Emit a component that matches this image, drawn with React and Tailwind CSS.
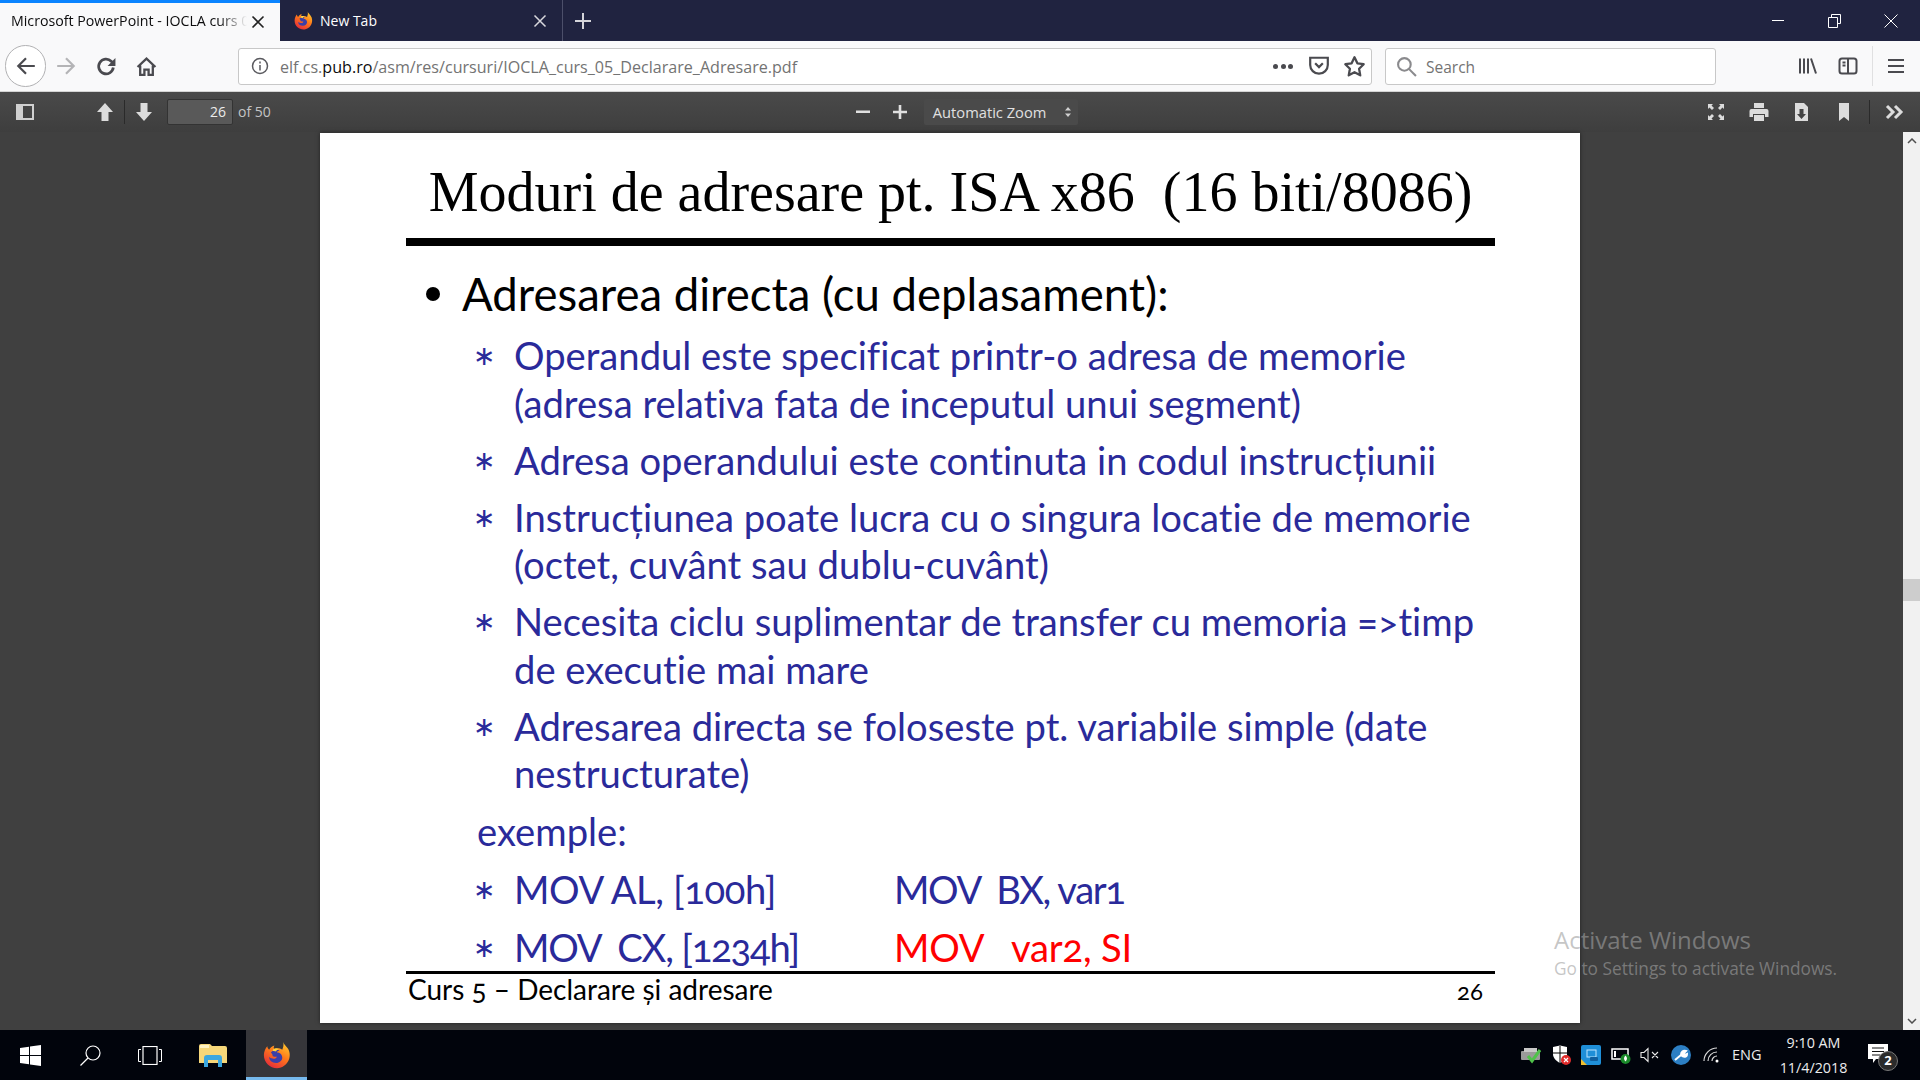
import { useId } from 'react';

const uiFont = 'font-["Open_Sans",sans-serif]';

function Firefox({ size = 20 }) {
  const id = useId();
  return (
    <svg width={size} height={size} viewBox="0 0 32 32">
      <defs>
        <linearGradient id={id + 'a'} x1="0.8" y1="0" x2="0.2" y2="1">
          <stop offset="0" stopColor="#ffcb2e" />
          <stop offset="0.45" stopColor="#ff7a1a" />
          <stop offset="1" stopColor="#e3263c" />
        </linearGradient>
      </defs>
      <path d="M23 1c1 3 3 4 5 7 3 4 3 9 2 12-2 7-8 11-14 11C8 31 1 25 1 16 1 12 3 8 5 6c0 2 1 3 2 4 1-2 3-4 6-5-1 2-1 3 0 4 3-1 6-1 9 1 1-3 2-5 1-9z" fill={`url(#${id}a)`} />
      <path d="M9 13c3-3 7-4 10-2-2 0-3 1-3 2 3 0 6 2 6 6 0 3-3 6-7 6-5 0-8-3-8-7 1 1 2 2 4 2 2 1 4 0 5-2-2 0-4 0-5-1 0-2-1-3-2-4z" fill="#3b3fa8" />
      <path d="M12 9c2-1 4-1 6 0-2 1-3 2-3 3l-4-1z" fill="#ffd23f" />
    </svg>
  );
}

function PdfIcon({ children, w = 20 }) {
  return (
    <svg width={w} height="20" viewBox="0 0 20 20" fill="#dcdcdc">
      {children}
    </svg>
  );
}

function TitleBar() {
  return (
    <div className={`flex h-[41px] shrink-0 bg-[#202340] ${uiFont}`}>
      <div className="flex w-[280px] items-center border-t-[3px] border-[#0a84ff] bg-[#f9f9fa] pl-[11px] pr-[15px]">
        <div className="w-[236px] overflow-hidden whitespace-nowrap pb-[2px] text-[14.200px] text-[#0c0c0d] [mask-image:linear-gradient(to_right,black_88%,transparent)]">
          Microsoft PowerPoint - IOCLA curs 05
        </div>
        <svg className="ml-auto" width="14" height="14" viewBox="0 0 14 14" stroke="#222" strokeWidth="1.600">
          <path d="M1.500 1.500l11 11M12.500 1.500l-11 11" />
        </svg>
      </div>
      <div className="flex w-[283px] items-center border-r border-[#4c4f6a] pl-[14px] pr-[15px] text-white">
        <Firefox size={19} />
        <span className="ml-[7px] text-[14px]">New Tab</span>
        <svg className="ml-auto" width="14" height="14" viewBox="0 0 14 14" stroke="#d8d8dd" strokeWidth="1.500">
          <path d="M1.500 1.500l11 11M12.500 1.500l-11 11" />
        </svg>
      </div>
      <div className="flex w-10 items-center justify-center">
        <svg width="20" height="20" viewBox="0 0 20 20" stroke="#d4d4da" strokeWidth="2">
          <path d="M10 2v16M2 10h16" />
        </svg>
      </div>
      <div className="ml-auto flex">
        <div className="flex w-14 items-center justify-center">
          <div className="h-px w-3 bg-white" />
        </div>
        <div className="flex w-14 items-center justify-center">
          <svg width="13" height="14" viewBox="0 0 13 14" fill="none" stroke="#fff">
            <path d="M3.500 3V.5h9v9H10M.5 3.500h9v10h-9z" />
          </svg>
        </div>
        <div className="flex w-[58px] items-center justify-center">
          <svg width="14" height="14" viewBox="0 0 14 14" stroke="#fff">
            <path d="M.5.5l13 13M13.500.5l-13 13" />
          </svg>
        </div>
      </div>
    </div>
  );
}

function NavIcon({ children }) {
  return <div className="flex h-full w-10 items-center justify-center">{children}</div>;
}

function NavBar() {
  return (
    <div className={`flex h-[51px] shrink-0 items-center border-b border-[#d4d4d4] bg-[#f9f9fa] pl-[5px] ${uiFont}`}>
      <div className="flex h-[42px] w-[41px] items-center justify-center rounded-full border border-[#b1b1b3] bg-white">
        <svg width="22" height="22" viewBox="0 0 20 20" fill="none" stroke="#4a4a4f" strokeWidth="2">
          <path d="M18 10H3M10 3l-7 7 7 7" />
        </svg>
      </div>
      <NavIcon>
        <svg width="22" height="22" viewBox="0 0 20 20" fill="none" stroke="#b4b4b6" strokeWidth="2">
          <path d="M2 10h15M10 3l7 7-7 7" />
        </svg>
      </NavIcon>
      <NavIcon>
        <svg width="21" height="21" viewBox="0 0 20 20" fill="none" stroke="#4a4a4f" strokeWidth="2.600">
          <path d="M16.500 11a7 7 0 1 1-2-6l2 2" />
          <path d="M18.500 2V9.500h-7.500z" fill="#4a4a4f" stroke="none" />
        </svg>
      </NavIcon>
      <NavIcon>
        <svg width="21" height="21" viewBox="0 0 20 20" fill="none" stroke="#4a4a4f" strokeWidth="2.200">
          <path d="M1.500 10.500L10 2.500l8.500 8M4 9v9h4v-5h4v5h4V9" />
        </svg>
      </NavIcon>
      <div className="ml-[72px] flex h-[37px] w-[1134px] items-center rounded-[3px] border border-[#c8c8c8] bg-white">
        <svg className="ml-[12px]" width="18" height="18" viewBox="0 0 18 18" fill="none" stroke="#5a5a5f" strokeWidth="1.500">
          <circle cx="9" cy="9" r="7.500" />
          <path d="M9 8v5.500M9 4.500v2" />
        </svg>
        <div className="ml-[11px] pt-[2px] text-[16.100px] text-[#737373]">
          elf.cs.<span className="text-[#0c0c0d]">pub.ro</span>/asm/res/cursuri/IOCLA_curs_05_Declarare_Adresare.pdf
        </div>
        <div className="ml-auto flex w-[102px] items-center">
          <div className="ml-[4px] flex w-[20px] justify-between">
            <span className="h-[5px] w-[5px] rounded-full bg-[#4a4a4f]" />
            <span className="h-[5px] w-[5px] rounded-full bg-[#4a4a4f]" />
            <span className="h-[5px] w-[5px] rounded-full bg-[#4a4a4f]" />
          </div>
          <svg className="ml-[15px]" width="22" height="22" viewBox="0 0 20 20" fill="none" stroke="#4a4a4f" strokeWidth="2">
            <path d="M2 2.500h16V9a8 8 0 0 1-16 0zM6.500 7.500L10 11l3.500-3.500" />
          </svg>
          <svg className="ml-[13px]" width="23" height="23" viewBox="0 0 20 20" fill="none" stroke="#4a4a4f" strokeWidth="2" strokeLinejoin="round">
            <path d="M10 2l2.500 5.200 5.500.8-4 4 1 5.700-5-2.700-5 2.700 1-5.700-4-4 5.500-.8z" />
          </svg>
        </div>
      </div>
      <div className="ml-[13px] flex h-[37px] w-[331px] items-center rounded-[3px] border border-[#c8c8c8] bg-white">
        <svg className="ml-[10px]" width="21" height="21" viewBox="0 0 20 20" fill="none" stroke="#8a8a8d" strokeWidth="2">
          <circle cx="8" cy="8" r="6" />
          <path d="M12.500 12.500L19 19" />
        </svg>
        <span className="ml-[9px] pt-[3px] text-[15.500px] text-[#737373]">Search</span>
      </div>
      <div className="ml-[72px] flex h-full">
        <NavIcon>
          <svg width="20" height="20" viewBox="0 0 20 20" fill="none" stroke="#4a4a4f" strokeWidth="2">
            <path d="M2 2.500v15M6 2.500v15M10 2.500v15M13 2.500l5 15" />
          </svg>
        </NavIcon>
        <NavIcon>
          <svg width="20" height="20" viewBox="0 0 20 20" fill="none" stroke="#4a4a4f" strokeWidth="2">
            <rect x="1.500" y="2.500" width="17" height="15" rx="2.500" />
            <path d="M10 2.500v15M4.500 6.500h3M4.500 9.500h3" />
          </svg>
        </NavIcon>
      </div>
      <div className="ml-[4px] h-[40px] w-px bg-[#e0e0e1]" />
      <div className="ml-[3px] flex h-full">
        <NavIcon>
          <svg width="16" height="16" viewBox="0 0 16 16" stroke="#4a4a4f" strokeWidth="2">
            <path d="M0 2h16M0 8h16M0 14h16" />
          </svg>
        </NavIcon>
      </div>
    </div>
  );
}

function PdfToolbar() {
  return (
    <div className={`flex h-[40px] shrink-0 items-center bg-gradient-to-b from-[#4a4a4a] to-[#3e3e3e] pl-[16px] text-[#d8d8d8] ${uiFont}`}>
      <svg width="18" height="16" viewBox="0 0 18 16">
        <rect x="1" y="1" width="16" height="14" fill="none" stroke="#d0d0d0" strokeWidth="2" />
        <rect x="2" y="2" width="5" height="12" fill="#d0d0d0" />
      </svg>
      <div className="ml-[61px]">
        <PdfIcon>
          <path d="M10 1l8 9h-4.500v9h-7v-9H2z" />
        </PdfIcon>
      </div>
      <div className="ml-[9px] h-[24px] w-px bg-[#2a2a2a]" />
      <div className="ml-[9px]">
        <PdfIcon>
          <path d="M10 19l8-9h-4.500V1h-7v9H2z" />
        </PdfIcon>
      </div>
      <div className="ml-[13px] flex h-[26px] w-[66px] items-center justify-end rounded-[2px] border border-[#333] bg-[#595959] pb-px pr-[6px] text-[14px] text-[#ececec]">
        26
      </div>
      <span className="ml-[5px] pb-[2px] text-[14px] text-[#c4c4c4]">of 50</span>
      <svg className="ml-[585px]" width="14" height="14" viewBox="0 0 14 14" fill="#e0e0e0">
        <rect y="5.500" width="14" height="2.500" />
      </svg>
      <svg className="ml-[23px]" width="14" height="14" viewBox="0 0 14 14" fill="#e0e0e0">
        <path d="M5.700 0h2.600v5.700H14v2.600H8.300V14H5.700V8.300H0V5.700h5.700z" />
      </svg>
      <div className="ml-[17px] flex h-[26px] w-[154px] items-center rounded-[2px] bg-[#4a4a4a] pl-[9px] text-[14.700px] text-[#e0e0e0]">
        Automatic Zoom
        <svg className="ml-auto mr-[6px]" width="8" height="12" viewBox="0 0 8 12" fill="#d0d0d0">
          <path d="M4 1l3 3.500H1zM4 11L1 7.500h6z" />
        </svg>
      </div>
      <div className="ml-auto flex items-center pr-[15px]">
        <PdfIcon>
          <path d="M2 2h5L5.500 3.500 8 6 6 8 3.500 5.500 2 7zM18 2v5l-1.500-1.500L14 8l-2-2 2.500-2.500L13 2zM2 18v-5l1.500 1.500L6 12l2 2-2.500 2.500L7 18zM18 18h-5l1.500-1.500L12 14l2-2 2.500 2.500L18 13z" />
        </PdfIcon>
        <div className="ml-[23px]">
          <PdfIcon>
            <path d="M5 1h10v5H5zM2.500 7h15A2 2 0 0 1 19.500 9v6H16v-3H4v3H.5V9a2 2 0 0 1 2-2zM5 13h10v6H5z" />
          </PdfIcon>
        </div>
        <div className="ml-[22px]">
          <PdfIcon>
            <path d="M4 1h9l4 4v14H4zM8.500 7v5H6l4.500 5 4.500-5h-2.500V7z" />
          </PdfIcon>
        </div>
        <div className="ml-[23px]">
          <PdfIcon>
            <path d="M5 1h10v18l-5-4-5 4z" />
          </PdfIcon>
        </div>
        <div className="ml-[15px] h-[24px] w-px bg-[#2a2a2a]" />
        <svg className="ml-[15px]" width="20" height="16" viewBox="0 0 20 16" fill="none" stroke="#dcdcdc" strokeWidth="3">
          <path d="M2 2l6 6-6 6M10 2l6 6-6 6" />
        </svg>
      </div>
    </div>
  );
}

function Star() {
  return <span className='w-[42px] shrink-0 pl-[1px] font-["DejaVu_Sans",sans-serif] text-[27px] tracking-normal'>∗</span>;
}

function Sub({ lines }) {
  return (
    <div className="mt-[9.500px] flex text-[#2a2a9a] first:mt-0">
      <Star />
      <div>
        {lines.map(l => (
          <div key={l} className="whitespace-pre">{l}</div>
        ))}
      </div>
    </div>
  );
}

function Slide() {
  return (
    <div className="ml-[320px] flex h-[890px] w-[1260px] flex-col bg-white pl-[86px] pr-[85px] pt-[25px] text-black shadow-[0_0_4px_rgba(0,0,0,0.5)]">
      <h1 className='h-[68px] whitespace-pre text-center font-["Liberation_Serif",serif] text-[56px] leading-[68px]'>
        {'Moduri de adresare pt. ISA x86  (16 biti/8086)'}
      </h1>
      <div className="mt-[12px] h-2 bg-black" />
      <div className='flex flex-1 flex-col font-["Lato",sans-serif] [font-variant-ligatures:none] [font-variant-numeric:oldstyle-nums]'>
        <div className="mt-[23px] flex h-[50px] items-center pl-[20px] text-[45.500px] leading-[50px]">
          <span className="h-[14px] w-[14px] rounded-full bg-black" />
          <span className="ml-[22px]">Adresarea directa (cu deplasament):</span>
        </div>
        <div className="mt-[13px] pl-[66px] text-[38.200px] leading-[47.500px]">
          <Sub lines={['Operandul este specificat printr-o adresa de memorie', '(adresa relativa fata de inceputul unui segment)']} />
          <Sub lines={['Adresa operandului este continuta in codul instrucțiunii']} />
          <Sub lines={['Instrucțiunea poate lucra cu o singura locatie de memorie', '(octet, cuvânt sau dublu-cuvânt)']} />
          <Sub lines={['Necesita ciclu suplimentar de transfer cu memoria =>timp', 'de executie mai mare']} />
          <Sub lines={['Adresarea directa se foloseste pt. variabile simple (date', 'nestructurate)']} />
          <div className="ml-[5px] mt-[10.500px] text-[#2a2a9a]">exemple:</div>
          <div className="mt-[10px] flex text-[#2a2a9a]">
            <Star />
            <span className="w-[380px] whitespace-pre tracking-[-0.4px]">MOV AL, [100h]</span>
            <span className="whitespace-pre tracking-[-1.400px]">MOV  BX, var1</span>
          </div>
          <div className="mt-[10.500px] flex text-[#2a2a9a]">
            <Star />
            <span className="w-[380px] whitespace-pre tracking-[-1.200px]">MOV  CX, [1234h]</span>
            <span className="whitespace-pre tracking-[-0.2px] text-[#ff0000]">MOV   var2, SI</span>
          </div>
        </div>
        <div className="h-[3px] bg-black" />
        <div className="flex pl-[2px] pr-[12px] text-[28px] leading-[30px]">
          <span>Curs 5 – Declarare și adresare</span>
          <span className="ml-auto mt-[2px] text-[24px]">26</span>
        </div>
      </div>
    </div>
  );
}

function Scrollbar() {
  return (
    <div className="flex w-[17px] shrink-0 flex-col items-center bg-[#f1f1f1]">
      <svg className="mt-[6px]" width="10" height="6" viewBox="0 0 10 6" fill="none" stroke="#505050" strokeWidth="1.500">
        <path d="M1 5l4-4 4 4" />
      </svg>
      <div className="mt-[435px] h-[22px] w-full bg-[#cdcdcd]" />
      <svg className="mt-auto mb-[6px]" width="10" height="6" viewBox="0 0 10 6" fill="none" stroke="#505050" strokeWidth="1.500">
        <path d="M1 1l4 4 4-4" />
      </svg>
    </div>
  );
}

function TrayIcons() {
  return (
    <>
      <svg width="22" height="18" viewBox="0 0 22 18">
        <rect x="1" y="5" width="19" height="9" rx="1" fill="#9a9a9a" />
        <rect x="4" y="2" width="13" height="4" fill="#c8c8c8" />
        <path d="M8 10l4 5 8-11" fill="none" stroke="#4fc24a" strokeWidth="3" />
      </svg>
      <svg className="ml-[9px]" width="20" height="20" viewBox="0 0 20 20">
        <path d="M2 2l7-1.500L16 2v7c0 4-3 7-7 9-4-2-7-5-7-9z" fill="#fff" />
        <path d="M9 1v17M2 8h14" stroke="#000" strokeWidth="1" />
        <circle cx="15" cy="15" r="5" fill="#e02b2b" />
        <path d="M13 13l4 4M17 13l-4 4" stroke="#fff" strokeWidth="1.200" />
      </svg>
      <svg className="ml-[10px]" width="20" height="20" viewBox="0 0 20 20">
        <rect width="20" height="20" rx="2" fill="#1f8fd8" />
        <path d="M0 14l6 6H0z" fill="#f0c030" />
        <rect x="6" y="5" width="9" height="7" fill="none" stroke="#bfe6ff" />
        <rect x="9" y="12" width="8" height="4" rx="1" fill="#0f5f9f" />
      </svg>
      <svg className="ml-[10px]" width="20" height="20" viewBox="0 0 20 20">
        <rect x="1" y="4" width="16" height="10" fill="none" stroke="#fff" strokeWidth="1.500" />
        <rect x="3" y="6" width="2" height="6" fill="#fff" />
        <circle cx="14.500" cy="14" r="5" fill="#1a8a2a" />
        <path d="M14.500 10.500c2 2 2 4 0 6-2-2-2-4 0-6z" fill="#fff" />
      </svg>
      <svg className="ml-[9px]" width="20" height="16" viewBox="0 0 20 16" fill="none" stroke="#e8e8e8" strokeWidth="1.100">
        <path d="M1 5.500h3L8 1.500v13l-4-4H1zM12 5l6 6M18 5l-6 6" />
      </svg>
      <svg className="ml-[11px]" width="20" height="20" viewBox="0 0 20 20">
        <circle cx="10" cy="10" r="10" fill="#2c7fc4" />
        <path d="M4 15l6-5M10 10c0-3 2-5 5-4l-2 2 1 2 2-1c0 3-3 4-6 1z" stroke="#fff" strokeWidth="2" fill="#fff" />
      </svg>
      <svg className="ml-[11px]" width="20" height="18" viewBox="0 0 20 18" fill="none" stroke="#d8d8d8" strokeWidth="1.200">
        <path d="M2 15A13 13 0 0 1 15 2M6 15a9 9 0 0 1 9-9M10 15a5 5 0 0 1 5-5" />
        <circle cx="15" cy="15" r="1.500" fill="#fff" stroke="none" />
      </svg>
    </>
  );
}

function Taskbar() {
  return (
    <div className={`flex h-[50px] shrink-0 items-center bg-[#01040c] text-[#ececec] ${uiFont}`}>
      <div className="flex h-full w-[60px] items-center justify-center">
        <svg width="21" height="21" viewBox="0 0 21 21" fill="#fff">
          <path d="M0 3l9-1.300v8.300H0zM10 1.500L21 0v10H10zM0 11h9v8.300L0 18zM10 11h11v10l-11-1.500z" />
        </svg>
      </div>
      <div className="flex h-full w-[60px] items-center justify-center">
        <svg width="21" height="21" viewBox="0 0 21 21" fill="none" stroke="#fff" strokeWidth="1.200">
          <circle cx="13" cy="8" r="7" />
          <path d="M8 13l-7.500 7.500" />
        </svg>
      </div>
      <div className="flex h-full w-[60px] items-center justify-center">
        <svg width="24" height="19" viewBox="0 0 24 19" fill="none" stroke="#fff" strokeWidth="1">
          <rect x="5" y=".5" width="14" height="18" strokeWidth="1.200" />
          <path d="M3 3.500H.5v12H3M21 3.500h2.500v12H21" />
        </svg>
      </div>
      <div className="flex h-full w-[66px] items-center justify-center">
        <svg width="28" height="24" viewBox="0 0 28 24">
          <path d="M0 3a2 2 0 0 1 2-2h9l2 2h13a2 2 0 0 1 2 2v15H0z" fill="#f6d77a" />
          <rect x="1" y="2" width="9" height="3" fill="#fff3c4" />
          <path d="M5 24V15a3 3 0 0 1 3-3h12a3 3 0 0 1 3 3v9h-4v-7H9v7z" fill="#3ba7e0" />
        </svg>
      </div>
      <div className="flex h-full w-[61px] items-center justify-center border-b-[3px] border-[#76b9ed] bg-[#36363a] pt-[3px]">
        <Firefox size={28} />
      </div>
      <div className="ml-auto flex h-full items-center">
        <TrayIcons />
        <span className="ml-[10px] text-[14.500px]">ENG</span>
        <div className="ml-[12px] flex w-[80px] flex-col items-center text-[14.300px] leading-[25px]">
          <span>9:10 AM</span>
          <span>11/4/2018</span>
        </div>
        <div className="relative ml-[14.500px] mr-[26px] h-[30px] w-[26px]">
          <svg width="20" height="20" viewBox="0 0 20 20" className="mt-[4px]">
            <path d="M0 0h20v15H8l-3 4v-4H0z" fill="#fff" />
            <path d="M4 4h12M4 7.500h12M4 11h8" stroke="#111" strokeWidth="1.200" />
          </svg>
          <span className="absolute bottom-[-1px] right-[-4px] flex h-[20px] w-[20px] items-center justify-center rounded-full border border-[#777] bg-[#2b2b2b] text-[13px] font-bold text-white">
            2
          </span>
        </div>
      </div>
    </div>
  );
}

export default function App() {
  return (
    <div className="relative flex h-[1080px] w-[1920px] flex-col overflow-hidden">
      <TitleBar />
      <NavBar />
      <PdfToolbar />
      <div className="flex min-h-0 flex-1 bg-[#404040]">
        <div className="min-w-0 flex-1 pt-px">
          <Slide />
        </div>
        <Scrollbar />
      </div>
      <Taskbar />
      {/* windows watermark sits over the page */}
      <div className={`absolute left-[1554px] top-[924px] text-[rgba(160,160,160,0.6)] ${uiFont}`}>
        <div className="text-[24px] leading-[32px]">Activate Windows</div>
        <div className="text-[17.300px] leading-[25px]">Go to Settings to activate Windows.</div>
      </div>
    </div>
  );
}
